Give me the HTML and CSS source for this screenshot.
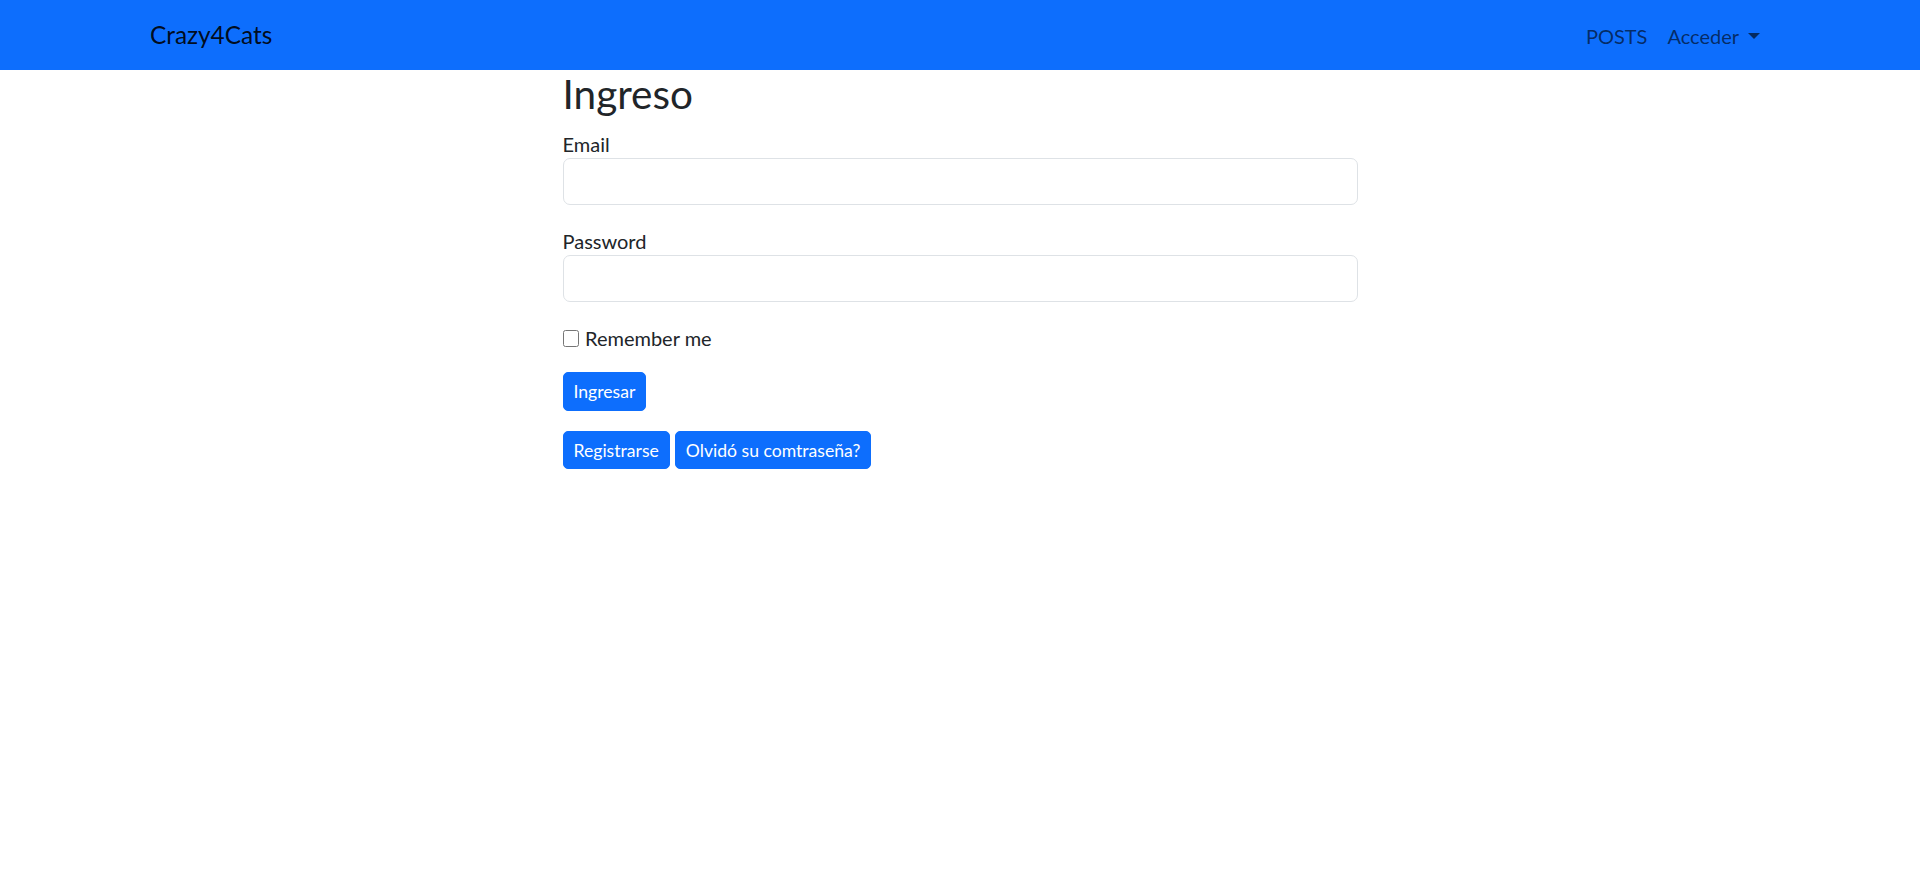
FILE: index.html
```html
<!DOCTYPE html>
<html lang="es">
<head>
<meta charset="utf-8">
<title>Crazy4Cats - Ingreso</title>
<link rel="stylesheet" href="styles.css">
</head>
<body>
<nav class="navbar">
  <div class="nav-container">
    <a class="brand" href="#">Crazy4Cats</a>
    <ul class="nav-links">
      <li><a class="nav-link" href="#">POSTS</a></li>
      <li><a class="nav-link dropdown-toggle" href="#">Acceder</a></li>
    </ul>
  </div>
</nav>
<main class="page">
  <section class="login-col">
    <h2 class="title">Ingreso</h2>
    <form class="login-form">
      <div class="field">
        <label for="email">Email</label>
        <input class="form-control" id="email" type="email">
      </div>
      <div class="field">
        <label for="password">Password</label>
        <input class="form-control" id="password" type="password">
      </div>
      <div class="field check-row">
        <input class="check" id="remember" type="checkbox"><label for="remember">Remember me</label>
      </div>
      <div class="field">
        <button class="btn" type="button">Ingresar</button>
      </div>
      <div class="btn-row">
        <a class="btn" href="#">Registrarse</a>
        <a class="btn" href="#">Olvidó su comtraseña?</a>
      </div>
    </form>
  </section>
</main>
</body>
</html>
```

FILE: styles.css
```css
* { box-sizing: border-box; }

body {
  margin: 0;
  font-family: "Lato", "Liberation Sans", sans-serif;
  font-size: 20px;
  line-height: 1.5;
  color: #212529;
  background: #fff;
}

.navbar {
  background: #0d6efd;
  padding: 10px 0;
}

.nav-container {
  max-width: 1650px;
  margin: 0 auto;
  padding: 0 15px;
  display: flex;
  align-items: center;
  justify-content: space-between;
}

.brand {
  font-size: 24.4px;
  line-height: 1.5;
  padding: 7px 0 5.5px;
  color: rgba(0, 0, 0, 0.9);
  text-decoration: none;
}

.nav-links {
  list-style: none;
  margin: 0;
  padding: 0;
  display: flex;
}

.nav-link {
  display: block;
  padding: 11px 10px 9px;
  color: rgba(0, 0, 0, 0.62);
  text-decoration: none;
}

.dropdown-toggle::after {
  content: "";
  display: inline-block;
  margin-left: 0.45em;
  vertical-align: 0.255em;
  border-top: 0.3em solid;
  border-right: 0.3em solid transparent;
  border-left: 0.3em solid transparent;
  border-bottom: 0;
}

.page {
  max-width: 1650px;
  margin: 0 auto;
  padding: 0 15px;
}

.login-col {
  width: 795px;
  margin: 0 auto;
}

.title {
  margin: 0 0 10px;
  padding-top: 1px;
  height: 48px;
  font-size: 40.5px;
  font-weight: 400;
  line-height: 46px;
}

.field {
  margin-bottom: 20px;
}

.field > label {
  display: block;
  height: 30px;
  padding-top: 1px;
  line-height: 30px;
}

.check-row {
  display: flex;
  align-items: center;
  height: 30px;
}

.check-row > label {
  display: inline;
}

.form-control {
  display: block;
  width: 100%;
  height: 47px;
  padding: 7.5px 15px;
  font: inherit;
  color: #212529;
  background: #fff;
  border: 1px solid #dee2e6;
  border-radius: 7px;
}

.check {
  appearance: none;
  -webkit-appearance: none;
  flex: none;
  width: 16.5px;
  height: 16.5px;
  margin: 3px 6px 0 0;
  border: 1.5px solid #767676;
  border-radius: 2.5px;
  background: #fff;
}

.btn {
  display: inline-block;
  height: 38.5px;
  padding: 6px 10px 4px;
  font-family: inherit;
  font-size: 17.6px;
  line-height: 1.5;
  color: #fff;
  background: #0d6efd;
  border: 1px solid #0d6efd;
  border-radius: 5px;
  text-decoration: none;
  cursor: pointer;
}

.btn-row {
  display: flex;
  gap: 5px;
}
```
